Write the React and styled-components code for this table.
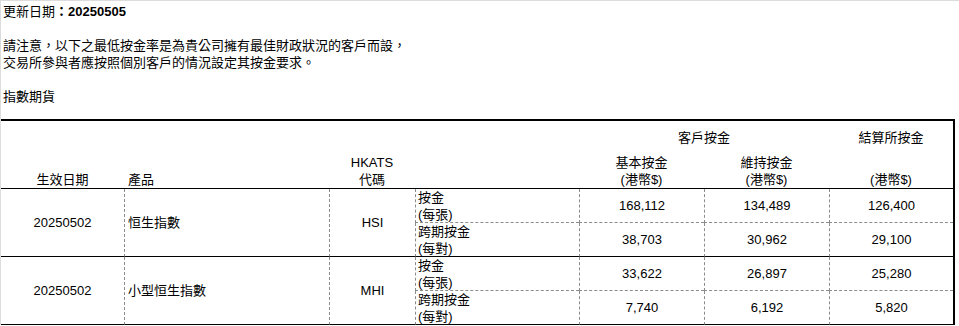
import React from 'react'
import styled, { createGlobalStyle } from 'styled-components'

const GlobalStyle = createGlobalStyle`
    html, body {
        margin: 0;
        padding: 0;
        background: #ffffff;
    }

    body {
        border-top: 1px solid #dcdcdc;
        border-left: 1px solid #dcdcdc;
        font-family: 'Liberation Sans', 'Noto Sans CJK TC', sans-serif;
        font-size: 13px;
        line-height: 17px;
        color: #000000;
    }
`

const dashed = '1px dashed #8c8c8c'

const products = [
    {
        date: '20250502',
        name: '恒生指數',
        code: 'HSI',
        rows: [
            { label: '按金', unit: '(每張)', values: ['168,112', '134,489', '126,400'] },
            { label: '跨期按金', unit: '(每對)', values: ['38,703', '30,962', '29,100'] },
        ],
    },
    {
        date: '20250502',
        name: '小型恒生指數',
        code: 'MHI',
        rows: [
            { label: '按金', unit: '(每張)', values: ['33,622', '26,897', '25,280'] },
            { label: '跨期按金', unit: '(每對)', values: ['7,740', '6,192', '5,820'] },
        ],
    },
]

const App = () => {
    return (
        <>
            <GlobalStyle />
            <Page>
                <Notice>
                    <Line>更新日期<Strong>：20250505</Strong></Line>
                    <Blank />
                    <Line>請注意，以下之最低按金率是為貴公司擁有最佳財政狀況的客戶而設，</Line>
                    <Line>交易所參與者應按照個別客戶的情況設定其按金要求。</Line>
                    <Blank />
                    <Line>指數期貨</Line>
                </Notice>

                <MarginGrid>
                    <HeadCell $col="1" $row="1 / 3" $align="center">生效日期</HeadCell>
                    <HeadCell $col="2" $row="1 / 3" $align="left">產品</HeadCell>
                    <HeadCell $col="3" $row="1 / 3" $align="center">
                        <span>HKATS</span>
                        <span>代碼</span>
                    </HeadCell>
                    <HeadCell $col="4" $row="1 / 3" />
                    <GroupCell $col="5 / 7">客戶按金</GroupCell>
                    <GroupCell $col="7">結算所按金</GroupCell>
                    <HeadCell $col="5" $row="2" $align="center">
                        <span>基本按金</span>
                        <span>(港幣$)</span>
                    </HeadCell>
                    <HeadCell $col="6" $row="2" $align="center">
                        <span>維持按金</span>
                        <span>(港幣$)</span>
                    </HeadCell>
                    <HeadCell $col="7" $row="2" $align="center">(港幣$)</HeadCell>

                    {products.map((p, i) => {
                        const start = 3 + i * 2
                        return (
                            <React.Fragment key={p.code}>
                                <SpanCell $col="1" $row={`${start} / ${start + 2}`} $align="center" $first>
                                    {p.date}
                                </SpanCell>
                                <SpanCell $col="2" $row={`${start} / ${start + 2}`} $align="flex-start">
                                    {p.name}
                                </SpanCell>
                                <SpanCell $col="3" $row={`${start} / ${start + 2}`} $align="center">
                                    {p.code}
                                </SpanCell>
                                {p.rows.map((r, j) => (
                                    <React.Fragment key={r.label}>
                                        <LabelCell $col="4" $row={start + j} $last={j === 1}>
                                            <span>{r.label}</span>
                                            <span>{r.unit}</span>
                                        </LabelCell>
                                        {r.values.map((v, k) => (
                                            <NumberCell key={k} $col={5 + k} $row={start + j} $last={j === 1}>
                                                {v}
                                            </NumberCell>
                                        ))}
                                    </React.Fragment>
                                ))}
                            </React.Fragment>
                        )
                    })}
                </MarginGrid>
            </Page>
        </>
    )
}

export default App

const Page = styled.div`
    padding: 2px 0 0 0;
    width: 958px;
`

const Notice = styled.div`
    display: flex;
    flex-direction: column;
    padding-left: 2px;
    margin-bottom: 14px;
`

const Line = styled.div`
    height: 17px;
    white-space: nowrap;
`

const Blank = styled.div`
    height: 17px;
`

const Strong = styled.b`
    font-weight: bold;
`

const MarginGrid = styled.div`
    display: grid;
    grid-template-columns: 123px 205px 86px 164px 125px 125px 124px;
    grid-template-rows: 33px 35px 34px 34px 34px 34px;
    width: 952px;
    border-top: 2px solid #000000;
    border-right: 2px solid #000000;
`

const Cell = styled.div`
    grid-column: ${(p) => p.$col};
    grid-row: ${(p) => p.$row};
    box-sizing: border-box;
    display: flex;
    flex-direction: column;
    white-space: nowrap;
`

const HeadCell = styled(Cell)`
    justify-content: flex-end;
    align-items: ${(p) => (p.$align === 'left' ? 'flex-start' : 'center')};
    padding-left: ${(p) => (p.$align === 'left' ? '4px' : '0')};
    border-bottom: 1px solid #000000;
`

const GroupCell = styled(Cell)`
    grid-row: 1;
    justify-content: center;
    align-items: center;
`

const SpanCell = styled(Cell)`
    justify-content: center;
    align-items: ${(p) => p.$align};
    padding-left: ${(p) => (p.$align === 'flex-start' ? '3px' : '0')};
    border-left: ${(p) => (p.$first ? 'none' : dashed)};
    border-bottom: 1px solid #000000;
`

const LabelCell = styled(Cell)`
    justify-content: center;
    align-items: flex-start;
    padding-left: 2px;
    border-left: ${dashed};
    border-bottom: ${(p) => (p.$last ? '1px solid #000000' : dashed)};
`

const NumberCell = styled(Cell)`
    justify-content: center;
    align-items: center;
    border-left: ${dashed};
    border-bottom: ${(p) => (p.$last ? '1px solid #000000' : dashed)};
`
